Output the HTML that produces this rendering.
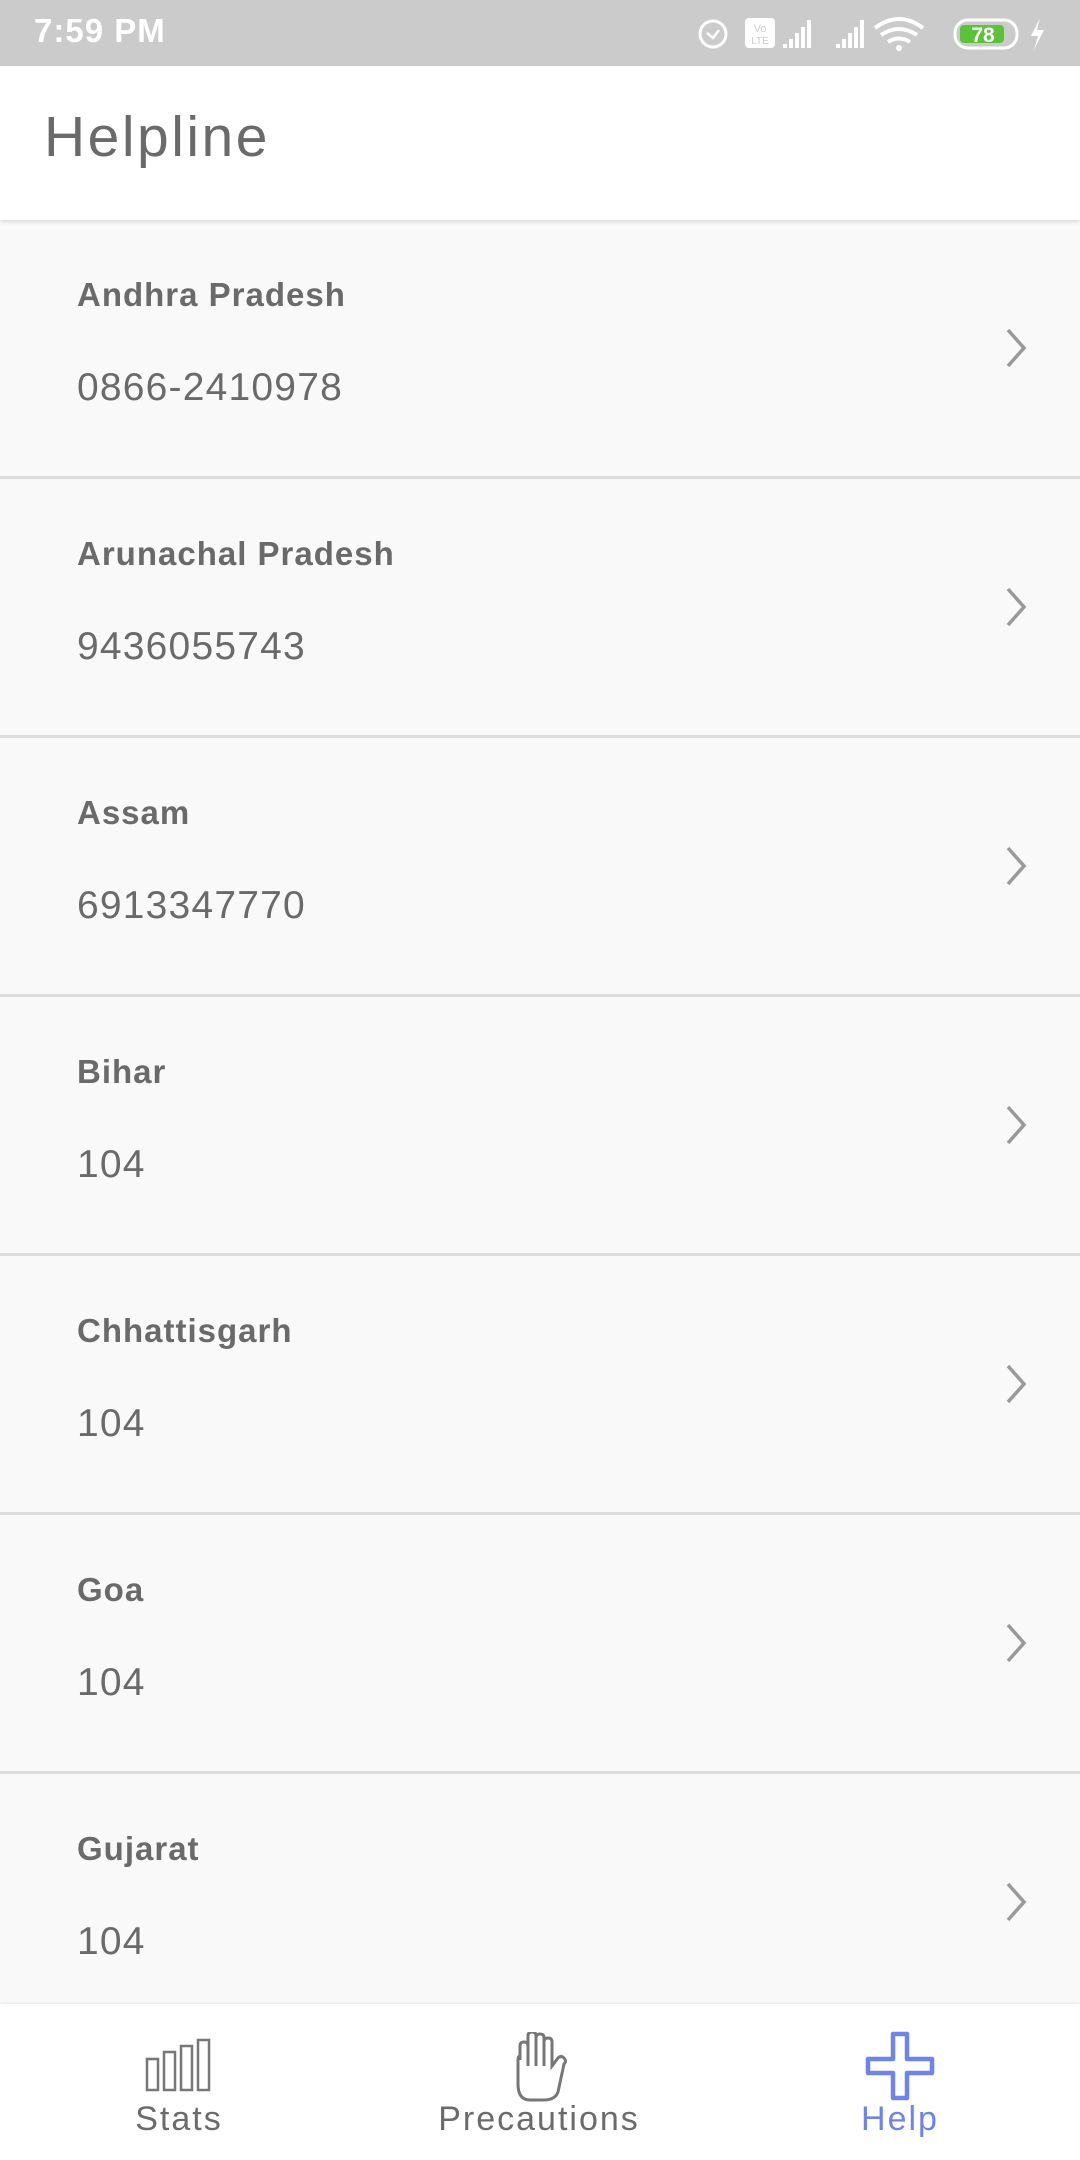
<!DOCTYPE html><html><head><style>
*{margin:0;padding:0;box-sizing:border-box}
body{width:1080px;height:2160px;position:relative;overflow:hidden;background:#f9f9f9;font-family:"Liberation Sans",sans-serif;color:#6b6b6b}
.sb{position:absolute;top:0;left:0;width:1080px;height:66px;background:#cbcbcb;color:#fff}
.hd{position:absolute;top:66px;left:0;width:1080px;height:154px;background:#fff;box-shadow:0 2px 4px rgba(0,0,0,.12);z-index:2}
.hd span{position:absolute;left:44px;top:38px;font-size:57px;font-weight:300;color:#6a6a6a;letter-spacing:2.5px}
.row{position:absolute;left:0;width:1080px;height:259px;background:#f9f9f9;border-bottom:3px solid #dcdcdc}
.n{position:absolute;left:77px;top:56px;font-size:33px;font-weight:bold;color:#6a6a6a;letter-spacing:1px}
.p{position:absolute;left:77px;top:146px;font-size:39px;color:#6a6a6a;letter-spacing:1.2px}
.ch{position:absolute;left:1002px;top:106px}
.nav{position:absolute;top:2004px;left:0;width:1080px;height:156px;background:#fff}
.lb{position:absolute;top:96px;font-size:34px;text-align:center;width:300px;letter-spacing:2px}
</style></head><body>
<div class="sb">
<span style="position:absolute;left:34px;top:12px;font-size:33px;font-weight:bold;letter-spacing:1px">7:59 PM</span>
<svg style="position:absolute;left:695px;top:14px" width="360" height="40" viewBox="0 0 360 40">
<circle cx="18" cy="20" r="13" fill="none" stroke="#fff" stroke-width="3"/><path d="M12 19l6 5 6-8" fill="none" stroke="#fff" stroke-width="2.5"/>
<rect x="50" y="4" width="30" height="30" rx="4" fill="#fff"/><text x="65" y="18" font-size="11" fill="#cbcbcb" text-anchor="middle" font-family="Liberation Sans">Vo</text><text x="65" y="30" font-size="10" fill="#cbcbcb" text-anchor="middle" font-family="Liberation Sans">LTE</text>
<path d="M90 34v-4M96 34v-9M102 34v-15M108 34v-21M114 34v-28" stroke="#fff" stroke-width="4"/>
<path d="M143 34v-4M149 34v-9M155 34v-15M161 34v-21M167 34v-28" stroke="#fff" stroke-width="4"/>
<path d="M180 14q24-18 48 0M186 21q18-12 36 0M193 28q11-7 22 0" fill="none" stroke="#fff" stroke-width="4"/><circle cx="204" cy="34" r="3" fill="#fff"/>
<rect x="260" y="6" width="62" height="28" rx="13" fill="none" stroke="#fff" stroke-width="3"/><rect x="265" y="11" width="44" height="18" rx="4" fill="#5cc23a"/><text x="288" y="28" font-size="21" font-weight="bold" fill="#fff" text-anchor="middle" font-family="Liberation Sans">78</text>
<path d="M345 4l-9 18h7l-4 14 10-20h-7z" fill="#fff"/>
</svg></div>
<div class="hd"><span>Helpline</span></div>
<div class="row" style="top:220px"><div class="n">Andhra Pradesh</div><div class="p">0866-2410978</div><svg class="ch" width="28" height="44"><path d="M6 4l16 18-16 18" fill="none" stroke="#999" stroke-width="3.5"/></svg></div>
<div class="row" style="top:479px"><div class="n">Arunachal Pradesh</div><div class="p">9436055743</div><svg class="ch" width="28" height="44"><path d="M6 4l16 18-16 18" fill="none" stroke="#999" stroke-width="3.5"/></svg></div>
<div class="row" style="top:738px"><div class="n">Assam</div><div class="p">6913347770</div><svg class="ch" width="28" height="44"><path d="M6 4l16 18-16 18" fill="none" stroke="#999" stroke-width="3.5"/></svg></div>
<div class="row" style="top:997px"><div class="n">Bihar</div><div class="p">104</div><svg class="ch" width="28" height="44"><path d="M6 4l16 18-16 18" fill="none" stroke="#999" stroke-width="3.5"/></svg></div>
<div class="row" style="top:1256px"><div class="n">Chhattisgarh</div><div class="p">104</div><svg class="ch" width="28" height="44"><path d="M6 4l16 18-16 18" fill="none" stroke="#999" stroke-width="3.5"/></svg></div>
<div class="row" style="top:1515px"><div class="n">Goa</div><div class="p">104</div><svg class="ch" width="28" height="44"><path d="M6 4l16 18-16 18" fill="none" stroke="#999" stroke-width="3.5"/></svg></div>
<div class="row" style="top:1774px;border:none"><div class="n">Gujarat</div><div class="p">104</div><svg class="ch" width="28" height="44"><path d="M6 4l16 18-16 18" fill="none" stroke="#999" stroke-width="3.5"/></svg></div>
<div class="nav" style="box-shadow:0 -1px 3px rgba(0,0,0,.08)">
<svg style="position:absolute;left:145px;top:34px" width="70" height="56"><g fill="none" stroke="#777" stroke-width="2.5"><rect x="2" y="21" width="11" height="31"/><rect x="19" y="14" width="11" height="38"/><rect x="36" y="8" width="11" height="44"/><rect x="53" y="2" width="11" height="50"/></g></svg>
<svg style="position:absolute;left:510px;top:28px" width="60" height="70" viewBox="0 0 60 70"><path d="M10 28V14q0-4 4-4t4 4V4q0-4 4-4t4 4v2q0-4 4-4t4 4v4q0-4 4-4t4 4v24l6-8q3-3 6 0t0 6L48 60q-3 8-14 8H20Q8 68 8 52V28q0-4 2-4" fill="none" stroke="#777" stroke-width="3"/><path d="M18 14v20M26 6v28M34 8v26" stroke="#777" stroke-width="3"/></svg>
<svg style="position:absolute;left:865px;top:27px" width="70" height="70"><path d="M28 3h14v25h25v14H42v25H28V42H3V28h25z" fill="none" stroke="#6f84ea" stroke-width="4.5" stroke-linejoin="round"/></svg>
<div class="lb" style="left:29px;color:#6b6b6b">Stats</div>
<div class="lb" style="left:389px;color:#6b6b6b">Precautions</div>
<div class="lb" style="left:750px;color:#6f84ea">Help</div>
</div>
</body></html>
